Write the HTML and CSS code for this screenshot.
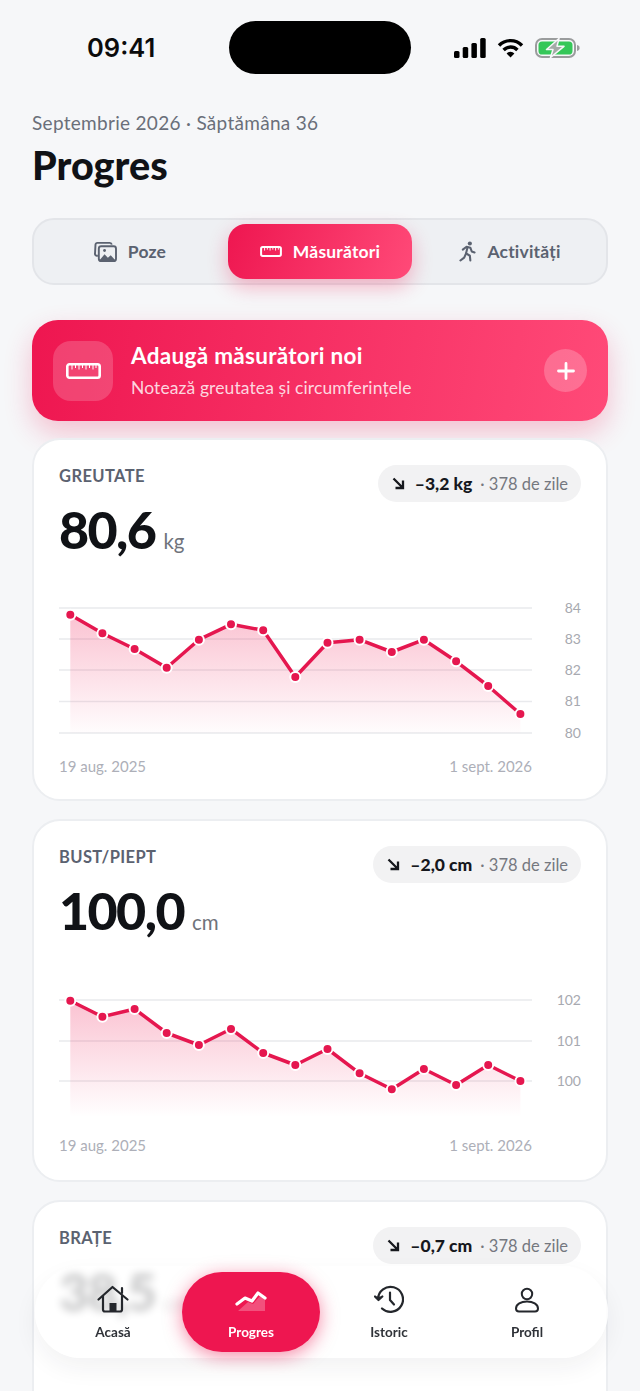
FILE: index.html
```html
<!DOCTYPE html>
<html lang="ro">
<head>
<meta charset="utf-8">
<title>Progres</title>
<link rel="stylesheet" href="styles.css">
</head>
<body>
<div class="screen">
  <header class="status">
    <div class="time">09:41</div>
    <div class="island"></div>
    <div class="status-icons">
      <svg width="32" height="20" viewBox="0 0 32 20"><rect x="0" y="13" width="5.5" height="7" rx="1.5"/><rect x="8.7" y="9" width="5.5" height="11" rx="1.5"/><rect x="17.4" y="5" width="5.5" height="15" rx="1.5"/><rect x="26.2" y="0" width="5.5" height="20" rx="1.5"/></svg>
      <svg width="27" height="20" viewBox="0 0 27 20" fill="none" stroke="#000" stroke-width="3.4"><path d="M2 7.5a16 16 0 0 1 23 0"/><path d="M6.6 12a9.6 9.6 0 0 1 13.8 0"/><path d="M13.5 19.5l-3.9-4.1a5.5 5.5 0 0 1 7.8 0z" fill="#000" stroke="none"/></svg>
      <svg width="45" height="20" viewBox="0 0 45 20"><rect x="1" y="1" width="39" height="18" rx="6" fill="none" stroke="#9a9c9d" stroke-width="2"/><rect x="3.5" y="3.5" width="34" height="13" rx="3.6" fill="#35c759"/><path d="M42 7c2 .4 2.6 1.600 2.600 3s-.6 2.600-2.600 3z" fill="#9a9c9d"/><path d="M24 .5L11.500 11.500h6.500L15.500 19.500 29 8.300h-7z" fill="#a5aaa7" stroke="#f6f7f9" stroke-width="1.500" stroke-linejoin="round"/></svg>
    </div>
  </header>

  <main class="content">
    <p class="eyebrow">Septembrie 2026 · Săptămâna 36</p>
    <h1 class="title">Progres</h1>

    <nav class="segments">
      <div class="segment">
        <svg width="23" height="21" viewBox="0 0 24 22" fill="none" stroke="#5b6270" stroke-width="2" stroke-linejoin="round"><path d="M4 15.500H3a2 2 0 0 1-2-2.200L1.500 4a2 2 0 0 1 2-2h13a2 2 0 0 1 2 1.800"/><rect x="5" y="5.500" width="18" height="15.500" rx="2.500"/><path d="M6 20l5-6 3.500 3.500 3-2.500 4.500 5z" fill="#5b6270" stroke="none"/><circle cx="11" cy="10" r="1.500" fill="#5b6270" stroke="none"/></svg>
        <span>Poze</span>
      </div>
      <div class="segment segment-active">
        <svg width="22" height="11" viewBox="0 0 24 12" fill="none" stroke="#fff"><rect x="1.200" y="1.200" width="21.600" height="9.600" rx="1.800" stroke-width="2.200"/><path d="M5 2v3M8 2v2M11 2v3M14 2v2M17 2v3M20 2v2" stroke-width="1"/></svg>
        <span>Măsurători</span>
      </div>
      <div class="segment">
        <svg width="17" height="21" viewBox="0 0 18 22" fill="none" stroke="#5b6270" stroke-width="2.200" stroke-linecap="round" stroke-linejoin="round"><circle cx="11.500" cy="2.500" r="2.200" fill="#5b6270" stroke="none"/><path d="M4 9l4-3 4 1 1.500 4 3 1"/><path d="M9 6.500L7.500 13l4 2.500 .5 5"/><path d="M7.500 13l-2 4.500L1.500 20.500"/></svg>
        <span>Activități</span>
      </div>
    </nav>

    <section class="banner">
      <div class="banner-icon">
        <svg width="35" height="16" viewBox="0 0 35 16" fill="none" stroke="#fff"><rect x="1.300" y="1.300" width="32.400" height="13.400" rx="2.200" stroke-width="2.600"/><path d="M6 2v4.500M9.500 2v3M13 2v4.500M16.500 2v3M20 2v4.500M23.500 2v3M27 2v4.500M30 2v3" stroke-width="1"/></svg>
      </div>
      <div class="banner-text">
        <div class="banner-title">Adaugă măsurători noi</div>
        <div class="banner-sub">Notează greutatea și circumferințele</div>
      </div>
      <div class="banner-plus">
        <svg width="18" height="18" viewBox="0 0 18 18" stroke="#fff" stroke-width="2.800" stroke-linecap="round"><path d="M9 1.500v15M1.500 9h15"/></svg>
      </div>
    </section>

    <article class="card">
      <div class="card-head">
        <div class="card-label">GREUTATE</div>
        <div class="delta">
          <svg width="13" height="13" viewBox="0 0 13 13" fill="none" stroke="#16181d" stroke-width="2.300"><path d="M1.500 1.500l9.500 9.500M11 3.500V11H3.500"/></svg>
          <b>–3,2 kg</b><span>· 378 de zile</span>
        </div>
      </div>
      <div class="value"><strong>80,6</strong><span>kg</span></div>
      <svg class="chart chart-weight" width="522" height="150" viewBox="0 0 522 150">
        <defs><linearGradient id="fill1" x1="0" y1="0" x2="0" y2="1"><stop offset="0" stop-color="#ee1650" stop-opacity=".26"/><stop offset="1" stop-color="#ee1650" stop-opacity=".01"/></linearGradient></defs>
        <g class="grid"><path d="M0 8h473M0 39h473M0 70h473M0 101.500h473M0 133h473"/></g>
        <path fill="url(#fill1)" d="M11.300 14.700L43.400 33.300 75.600 49 107.700 67.700 139.900 39.700 172 24.300 204.200 30.300 236.300 77 268.500 42.700 300.600 39.700 332.800 52 364.900 39.700 397.100 61.300 429.200 86 461.400 114V133H11.300z"/>
        <polyline class="line" points="11.300,14.700 43.400,33.300 75.600,49 107.700,67.700 139.900,39.700 172,24.300 204.200,30.300 236.300,77 268.500,42.700 300.600,39.700 332.800,52 364.900,39.700 397.100,61.300 429.200,86 461.400,114"/>
        <g class="dots"><circle cx="11.300" cy="14.700" r="5"/><circle cx="43.400" cy="33.300" r="5"/><circle cx="75.600" cy="49" r="5"/><circle cx="107.700" cy="67.700" r="5"/><circle cx="139.900" cy="39.700" r="5"/><circle cx="172" cy="24.300" r="5"/><circle cx="204.200" cy="30.300" r="5"/><circle cx="236.300" cy="77" r="5"/><circle cx="268.500" cy="42.700" r="5"/><circle cx="300.600" cy="39.700" r="5"/><circle cx="332.800" cy="52" r="5"/><circle cx="364.900" cy="39.700" r="5"/><circle cx="397.100" cy="61.300" r="5"/><circle cx="429.200" cy="86" r="5"/><circle cx="461.400" cy="114" r="5"/></g>
        <g class="ticks"><text x="522" y="13">84</text><text x="522" y="44">83</text><text x="522" y="75">82</text><text x="522" y="106">81</text><text x="522" y="138">80</text></g>
      </svg>
      <div class="dates"><span>19 aug. 2025</span><span>1 sept. 2026</span></div>
    </article>

    <article class="card">
      <div class="card-head">
        <div class="card-label">BUST/PIEPT</div>
        <div class="delta">
          <svg width="13" height="13" viewBox="0 0 13 13" fill="none" stroke="#16181d" stroke-width="2.300"><path d="M1.500 1.500l9.500 9.500M11 3.500V11H3.500"/></svg>
          <b>–2,0 cm</b><span>· 378 de zile</span>
        </div>
      </div>
      <div class="value"><strong>100,0</strong><span>cm</span></div>
      <svg class="chart chart-bust" width="522" height="137" viewBox="0 0 522 137">
        <defs><linearGradient id="fill2" x1="0" y1="0" x2="0" y2="1"><stop offset="0" stop-color="#ee1650" stop-opacity=".26"/><stop offset="1" stop-color="#ee1650" stop-opacity="0"/></linearGradient></defs>
        <g class="grid"><path d="M0 8h473M0 49h473M0 89h473"/></g>
        <path fill="url(#fill2)" d="M11.300 8.700L43.400 24.700 75.600 17 107.700 41 139.900 53 172 37 204.200 61 236.300 73 268.500 57 300.600 81.300 332.800 97.300 364.900 77 397.100 93 429.200 73 461.400 89V125H11.300z"/>
        <polyline class="line" points="11.300,8.700 43.400,24.700 75.600,17 107.700,41 139.900,53 172,37 204.200,61 236.300,73 268.500,57 300.600,81.300 332.800,97.300 364.900,77 397.100,93 429.200,73 461.400,89"/>
        <g class="dots"><circle cx="11.300" cy="8.700" r="5"/><circle cx="43.400" cy="24.700" r="5"/><circle cx="75.600" cy="17" r="5"/><circle cx="107.700" cy="41" r="5"/><circle cx="139.900" cy="53" r="5"/><circle cx="172" cy="37" r="5"/><circle cx="204.200" cy="61" r="5"/><circle cx="236.300" cy="73" r="5"/><circle cx="268.500" cy="57" r="5"/><circle cx="300.600" cy="81.300" r="5"/><circle cx="332.800" cy="97.300" r="5"/><circle cx="364.900" cy="77" r="5"/><circle cx="397.100" cy="93" r="5"/><circle cx="429.200" cy="73" r="5"/><circle cx="461.400" cy="89" r="5"/></g>
        <g class="ticks"><text x="522" y="13">102</text><text x="522" y="54">101</text><text x="522" y="94">100</text></g>
      </svg>
      <div class="dates"><span>19 aug. 2025</span><span>1 sept. 2026</span></div>
    </article>

    <article class="card">
      <div class="card-head">
        <div class="card-label">BRAȚE</div>
        <div class="delta">
          <svg width="13" height="13" viewBox="0 0 13 13" fill="none" stroke="#16181d" stroke-width="2.300"><path d="M1.500 1.500l9.500 9.500M11 3.500V11H3.500"/></svg>
          <b>–0,7 cm</b><span>· 378 de zile</span>
        </div>
      </div>
      <div class="value"><strong>38,5</strong><span>cm</span></div>
    </article>
  </main>

  <nav class="tabbar">
    <div class="tab">
      <svg width="32" height="28" viewBox="0 0 32 28" fill="none" stroke="#24272c" stroke-width="2.200" stroke-linejoin="round" stroke-linecap="round"><path d="M1.500 14.500L15.500 2l15 12.500"/><path d="M6 11v13.500a2 2 0 0 0 2 2h15a2 2 0 0 0 2-2V11"/><path d="M25 8V3"/><rect x="12.500" y="18" width="7" height="8.500" fill="#24272c" stroke="none"/></svg>
      <span>Acasă</span>
    </div>
    <div class="tab tab-active">
      <svg width="32" height="24" viewBox="0 0 32 24" fill="none"><path d="M3 22l10-9 5 2 7-8 5 3v12z" fill="#fff" fill-opacity=".25" stroke="none"/><path d="M2 15l8-6 7 3 6-8 7 5" stroke="#fff" stroke-width="3.200" stroke-linecap="round" stroke-linejoin="round"/></svg>
      <span>Progres</span>
    </div>
    <div class="tab">
      <svg width="30" height="28" viewBox="0 0 30 28" fill="none" stroke="#24272c" stroke-width="2.200" stroke-linecap="round" stroke-linejoin="round"><path d="M4 14A12.500 12.500 0 1 1 8 23.500"/><path d="M1 11.500l3.500 3.500 3.800-3.500" fill="#24272c"/><path d="M16 7.500V15l4 4.500"/></svg>
      <span>Istoric</span>
    </div>
    <div class="tab">
      <svg width="26" height="26" viewBox="0 0 26 26" fill="none" stroke="#24272c" stroke-width="2"><circle cx="13" cy="7" r="5.200"/><path d="M2 21.500c0-4.500 5-7 11-7s11 2.500 11 7c0 1.800-1 3-3 3H5c-2 0-3-1.200-3-3z"/></svg>
      <span>Profil</span>
    </div>
  </nav>
</div>
</body>
</html>
```
FILE: styles.css
```css
* { box-sizing: border-box; }
html, body { margin: 0; padding: 0; }
body {
  background: #f6f7f9;
  font-family: "Lato", "Noto Sans", "Liberation Sans", sans-serif;
  color: #14161a;
}
.screen {
  position: relative;
  width: 640px;
  height: 1391px;
  overflow: hidden;
}

/* status bar */
.status {
  display: grid;
  grid-template-columns: 229px 182px 229px;
  align-items: center;
  padding-top: 21px;
}
.time {
  padding-left: 87px;
  font-family: "Inter", sans-serif;
  font-size: 25.500px;
  font-weight: 600;
  color: #0b0b0c;
}
.island { height: 53px; border-radius: 27px; background: #000; }
.status-icons {
  display: flex;
  align-items: center;
  gap: 11px;
  padding-left: 43px;
}

/* content */
.content { padding: 37px 32px 0; }
.eyebrow {
  margin: 0;
  font-size: 19px;
  letter-spacing: .3px;
  line-height: 24px;
  color: #6a6f79;
}
.title {
  margin: 8px 0 0;
  font-size: 39.500px;
  line-height: 44px;
  font-weight: 900;
  color: #101216;
}

/* segmented control */
.segments {
  display: grid;
  grid-template-columns: repeat(3, 1fr);
  gap: 6px;
  margin-top: 31px;
  height: 67px;
  padding: 4px;
  border: 2px solid #e3e5e9;
  border-radius: 22px;
  background: #eef0f3;
}
.segment {
  display: flex;
  align-items: center;
  justify-content: center;
  gap: 11px;
  font-size: 17.500px;
  letter-spacing: .2px;
  font-weight: 700;
  color: #5b6270;
}
.segment-active {
  border-radius: 18px;
  color: #fff;
  background: linear-gradient(110deg, #ee1650, #ff4a78);
  box-shadow: 0 8px 20px rgba(238, 22, 80, .3);
}

/* banner */
.banner {
  display: flex;
  align-items: center;
  margin-top: 35px;
  height: 101px;
  padding: 0 21px;
  border-radius: 26px;
  background: linear-gradient(100deg, #ee1650, #ff4a78);
  box-shadow: 0 12px 28px rgba(238, 22, 80, .24);
  color: #fff;
}
.banner-icon {
  display: flex;
  align-items: center;
  justify-content: center;
  width: 60px;
  height: 60px;
  border-radius: 18px;
  background: rgba(255, 255, 255, .18);
}
.banner-text { flex: 1; margin-left: 18px; padding-bottom: 2px; }
.banner-title { font-size: 22.500px; letter-spacing: .3px; line-height: 30px; font-weight: 700; }
.banner-sub { margin-top: 6px; font-size: 17.500px; letter-spacing: .1px; line-height: 22px; color: rgba(255, 255, 255, .82); }
.banner-plus {
  display: flex;
  align-items: center;
  justify-content: center;
  width: 43px;
  height: 43px;
  border-radius: 50%;
  background: rgba(255, 255, 255, .22);
}

/* cards */
.card {
  margin-top: 18px;
  height: 363px;
  padding: 25px 25px 0;
  border: 2px solid #eceef1;
  border-radius: 28px;
  background: #fff;
}
.banner + .card { margin-top: 17px; }
.card-head {
  display: flex;
  justify-content: space-between;
  align-items: flex-start;
}
.card-label {
  font-size: 16.500px;
  line-height: 22px;
  font-weight: 700;
  letter-spacing: .4px;
  color: #5b6270;
}
.delta {
  display: flex;
  align-items: center;
  height: 37px;
  padding: 0 13px 0 14px;
  border-radius: 19px;
  background: #f2f2f3;
  font-size: 16.500px;
  color: #75787f;
}
.delta b { margin: 0 8px 0 10px; font-size: 17.500px; font-weight: 900; color: #16181d; }
.value {
  display: flex;
  align-items: baseline;
  gap: 8px;
  margin-top: -5px;
  height: 64px;
}
.value strong {
  font-size: 52px;
  letter-spacing: -1.600px;
  line-height: 64px;
  font-weight: 900;
  color: #101216;
}
.value span { font-size: 20.500px; color: #6f737b; }
.chart { display: block; margin-top: 39px; overflow: visible; }
.chart-bust { margin-top: 50px; }
.grid path { stroke: #e9eaed; stroke-width: 1.500; fill: none; }
.line {
  fill: none;
  stroke: #e5174f;
  stroke-width: 3.500;
  stroke-linejoin: round;
}
.dots circle { fill: #e5174f; stroke: #fff; stroke-width: 2; }
.ticks text {
  font-size: 14px;
  fill: #a7a9b0;
  text-anchor: end;
}
.dates {
  display: flex;
  justify-content: space-between;
  width: 473px;
  margin-top: 6px;
  font-size: 15px;
  line-height: 20px;
  color: #adafb8;
}

/* tab bar */
.tabbar {
  position: absolute;
  left: 35px;
  right: 32px;
  bottom: 33px;
  height: 92px;
  display: grid;
  grid-template-columns: repeat(4, 138px);
  padding: 6px 9px;
  border-radius: 46px;
  background: rgba(255, 255, 255, .76);
  -webkit-backdrop-filter: blur(4px);
  backdrop-filter: blur(4px);
  box-shadow: 0 10px 24px rgba(30, 35, 45, .06);
}
.tab {
  display: flex;
  flex-direction: column;
  align-items: center;
  justify-content: flex-end;
  gap: 10px;
  padding-bottom: 11px;
  border-radius: 40px;
  font-size: 13.500px;
  line-height: 18px;
  font-weight: 700;
  color: #2f3238;
}
.tab svg { display: block; }
.tab-active {
  color: #fff;
  background: #ee1650;
  box-shadow: 0 4px 18px rgba(238, 22, 80, .5);
}
```
